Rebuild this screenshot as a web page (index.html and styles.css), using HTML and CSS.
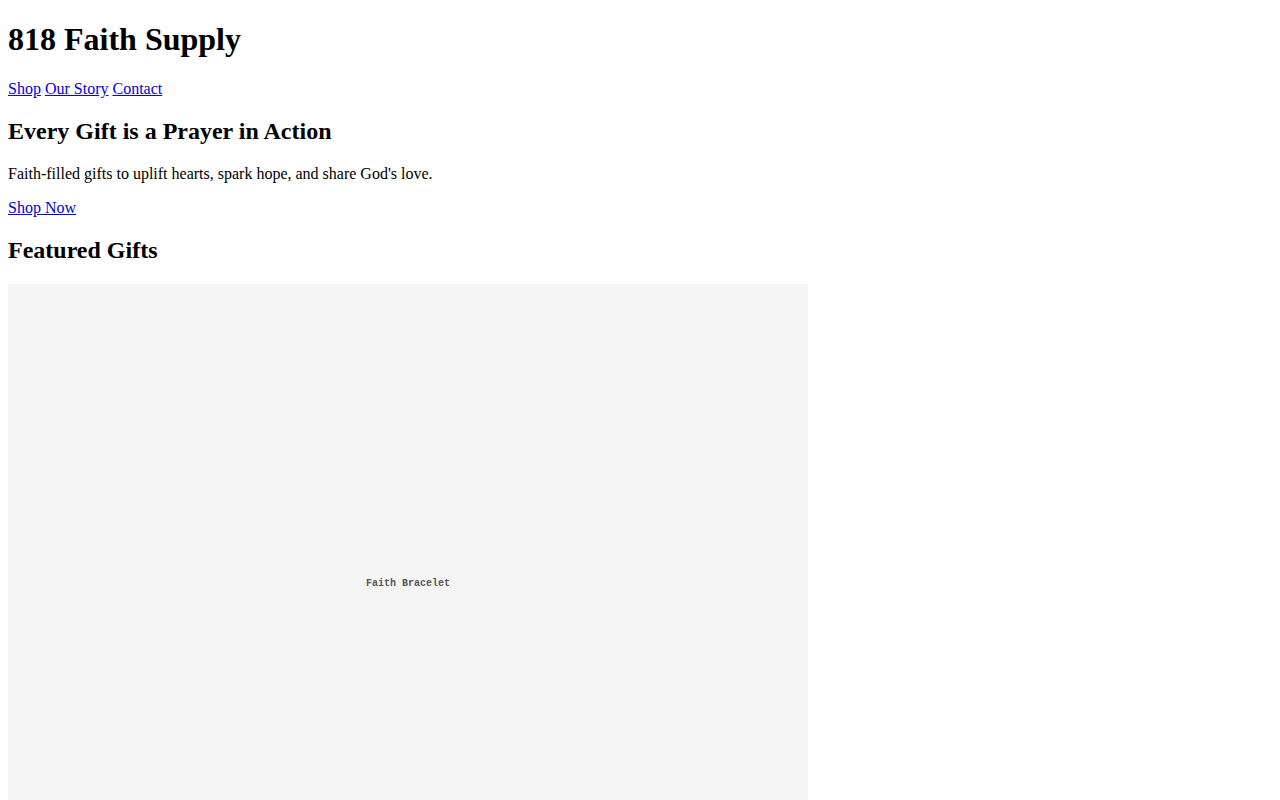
FILE: index.html
```html
<!DOCTYPE html>
<html>
<head>
<meta charset="utf-8">
<title>818 Faith Supply</title>
<link rel="stylesheet" href="styles.css">
</head>
<body>
<header>
<h1>818 Faith Supply</h1>
<nav><a href="#">Shop</a> <a href="#">Our Story</a> <a href="#">Contact</a></nav>
</header>
<section class="hero">
<h2>Every Gift is a Prayer in Action</h2>
<p>Faith-filled gifts to uplift hearts, spark hope, and share God's love.</p>
<p><a href="#">Shop Now</a></p>
</section>
<section class="featured">
<h2>Featured Gifts</h2>
<div class="product">
<div class="placeholder"><span class="ph-label">Faith Bracelet</span></div>
</div>
</section>
</body>
</html>
```
FILE: styles.css
```css
body {
  margin: 0 8px 8px;
  font-family: "Liberation Serif", "Times New Roman", serif;
  color: #000;
  background: #fff;
}
h1 {
  margin-top: 21.44px;
}
a {
  color: #0000ee;
}
.placeholder {
  width: 800px;
  height: 600px;
  background: #f5f5f5;
  display: flex;
  align-items: center;
  justify-content: center;
}
.ph-label {
  font-family: "Liberation Mono", "Courier New", monospace;
  font-weight: bold;
  font-size: 10px;
  color: #555;
}
```
